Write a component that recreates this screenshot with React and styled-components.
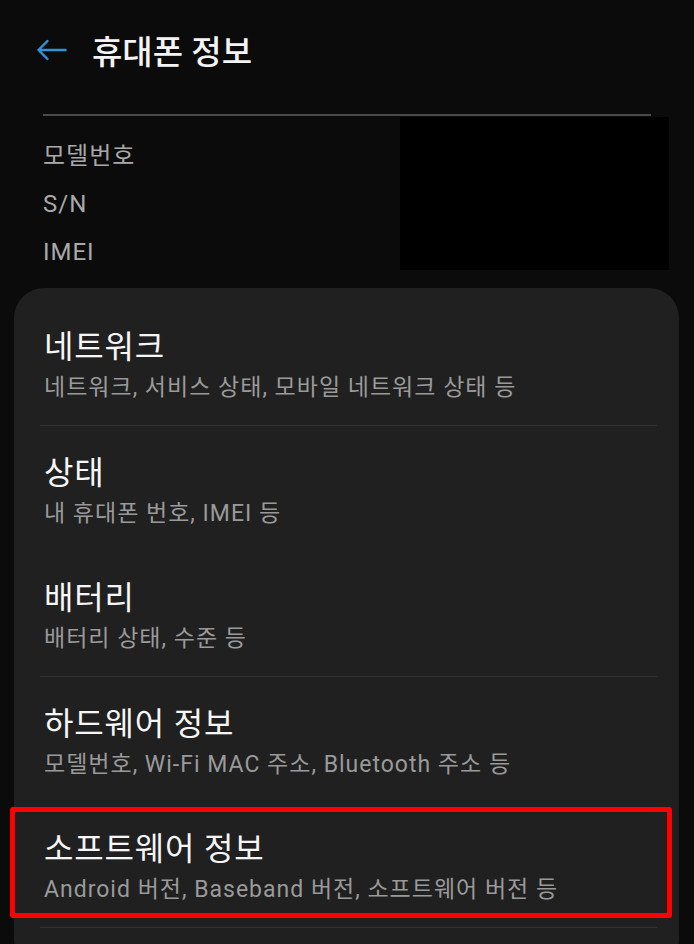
import React from 'react';
import styled, { createGlobalStyle } from 'styled-components';

const GlobalStyle = createGlobalStyle`
  html, body {
    margin: 0;
    padding: 0;
    background: #0b0b0b;
  }
  body {
    font-family: Roboto, "Noto Sans CJK KR", sans-serif;
  }
`;

const Screen = styled.div`
  width: 694px;
  height: 944px;
  overflow: hidden;
  background: #0b0b0b;
  color: #f2f2f2;
`;

const Header = styled.header`
  height: 100px;
  display: flex;
  align-items: center;
  padding-left: 36px;
  gap: 25px;
`;

const BackButton = styled.button`
  display: flex;
  align-items: center;
  justify-content: center;
  width: 31px;
  height: 30px;
  padding: 0;
  border: none;
  background: transparent;
  color: #2b95d6;
`;

const Title = styled.h1`
  margin: 0;
  font-size: 33px;
  font-weight: 500;
  color: #f4f4f4;
`;

const InfoSection = styled.section`
  padding-left: 43px;
  margin-top: 14px;
`;

const Rule = styled.div`
  height: 2px;
  background: #4a4a4a;
  margin-right: 43px;
`;

const InfoRow = styled.div`
  display: grid;
  grid-template-columns: 1fr 269px;
  align-items: start;
  margin-top: 1px;
  padding-right: 25px;
`;

const Labels = styled.ul`
  list-style: none;
  margin: 0;
  padding: 15px 0 0;
`;

const Label = styled.li`
  height: 48px;
  line-height: 48px;
  font-size: 24px;
  letter-spacing: 1px;
  color: #a9a9a9;
`;

const Redacted = styled.div`
  height: 153px;
  background: #000;
`;

const Card = styled.div`
  margin: 12px 15px 0 14px;
  padding: 12px 0 40px;
  background: #202020;
  border-radius: 30px;
`;

const Item = styled.div`
  position: relative;
  height: 125px;
  box-sizing: border-box;
  padding: 29px 30px 0;
`;

const ItemTitle = styled.div`
  font-size: 32px;
  line-height: 36px;
  font-weight: 400;
  color: #f6f6f6;
  letter-spacing: 0.8px;
`;

const ItemSub = styled.div`
  margin-top: 9px;
  font-size: 23px;
  line-height: 28px;
  color: #9a9a9a;
  letter-spacing: 1px;
`;

const Divider = styled.div`
  height: 1px;
  background: #323232;
  margin: 0 22px 0 26px;
`;

const Highlight = styled.span`
  position: absolute;
  top: 5px;
  bottom: 9px;
  left: -4px;
  right: 7px;
  border: 5px solid #ff0000;
  border-radius: 3px;
  pointer-events: none;
`;

const BackArrow = () => (
  <svg width="31" height="24" viewBox="0 0 31 24" fill="none">
    <path
      d="M29.5 12H2.5M11.5 3L2.5 12l9 9"
      stroke="currentColor"
      strokeWidth="2.4"
      strokeLinecap="round"
      strokeLinejoin="round"
    />
  </svg>
);

const groups = [
  [{ title: '네트워크', sub: '네트워크, 서비스 상태, 모바일 네트워크 상태 등' }],
  [
    { title: '상태', sub: '내 휴대폰 번호, IMEI 등' },
    { title: '배터리', sub: '배터리 상태, 수준 등' }
  ],
  [
    { title: '하드웨어 정보', sub: '모델번호, Wi-Fi MAC 주소, Bluetooth 주소 등' },
    { title: '소프트웨어 정보', sub: 'Android 버전, Baseband 버전, 소프트웨어 버전 등', marked: true }
  ]
];

const App = () => {
  return (
    <Screen>
      <GlobalStyle />
      <Header>
        <BackButton aria-label="뒤로">
          <BackArrow />
        </BackButton>
        <Title>휴대폰 정보</Title>
      </Header>

      <InfoSection>
        <Rule />
        <InfoRow>
          <Labels>
            <Label>모델번호</Label>
            <Label>S/N</Label>
            <Label>IMEI</Label>
          </Labels>
          <Redacted />
        </InfoRow>
      </InfoSection>

      <Card>
        {groups.map((group, gi) => (
          <React.Fragment key={gi}>
            {group.map((item) => (
              <Item key={item.title}>
                <ItemTitle>{item.title}</ItemTitle>
                <ItemSub>{item.sub}</ItemSub>
                {item.marked && <Highlight />}
              </Item>
            ))}
            <Divider />
          </React.Fragment>
        ))}
      </Card>
    </Screen>
  );
};

export default App;
